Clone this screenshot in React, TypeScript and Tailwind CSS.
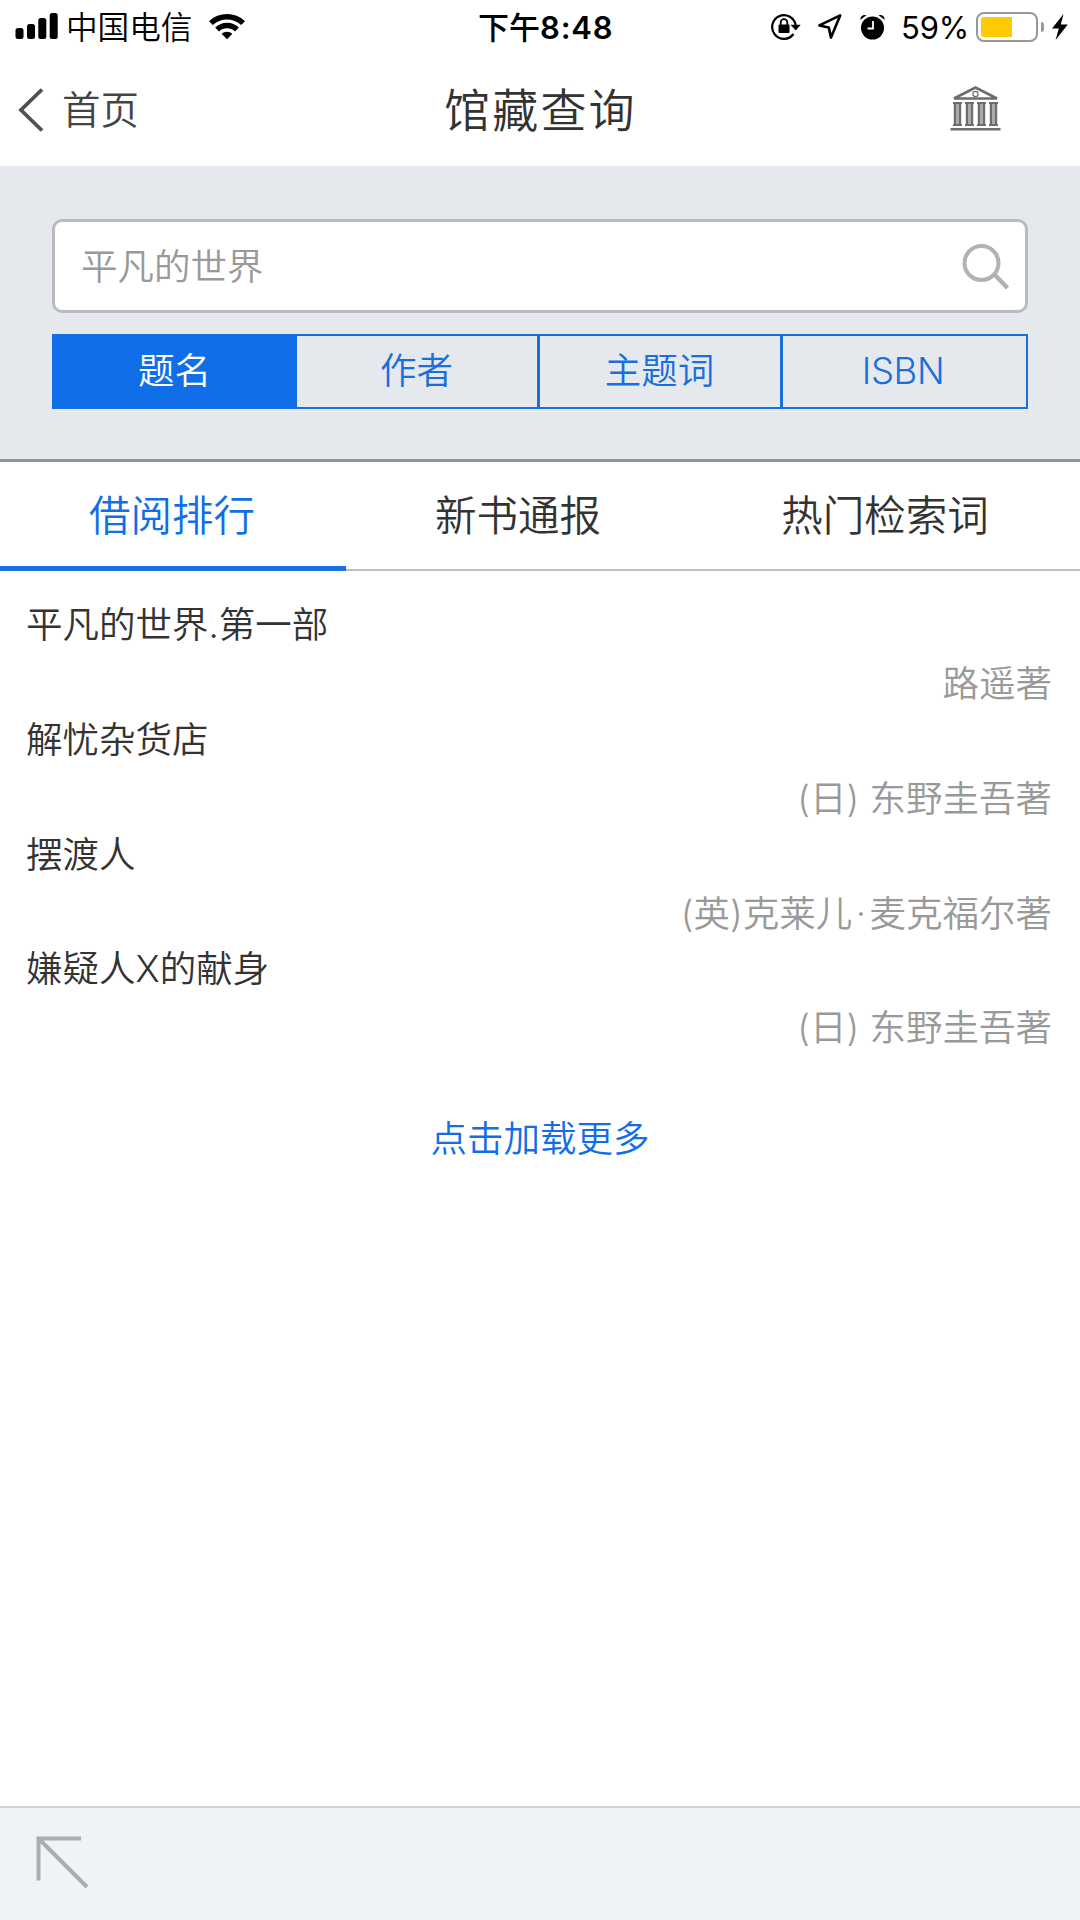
import React from 'react';

const searchTypes = [
  { id: 1, label: '题名', cell: 'w-[245px] bg-[#0f6ee8] text-white' },
  { id: 2, label: '作者', cell: 'w-[243px] border-r-[3px] pr-[1px]' },
  { id: 3, label: '主题词', cell: 'w-[243px] border-r-[3px] pr-[1px]' },
  { id: 4, label: 'ISBN', cell: 'w-[245px] border-r-2 pr-[3px] tracking-[-0.4px]' },
];

const books = [
  { id: 1, title: '平凡的世界.第一部', author: '路遥著' },
  { id: 2, title: '解忧杂货店', author: '(日) 东野圭吾著' },
  { id: 3, title: '摆渡人', author: '(英)克莱儿·麦克福尔著' },
  { id: 4, title: '嫌疑人X的献身', author: '(日) 东野圭吾著' },
];

const StatusBar = () => (
  <div className="flex h-[54px] items-center text-[31px] leading-none text-black">
    <div className="flex w-[478px] items-center">
      <svg className="ml-[15px]" width="44" height="28" viewBox="0 0 44 28">
        <rect x="0.5" y="15" width="8" height="11" rx="2.5" />
        <rect x="12" y="11" width="8" height="15" rx="2.5" />
        <rect x="23.3" y="5" width="8" height="21" rx="2.5" />
        <rect x="34.7" y="0" width="8" height="26" rx="2.5" />
      </svg>
      <span className="ml-[7px] pt-[2px] text-[31.6px] font-[350]">中国电信</span>
      <svg className="ml-[16px]" width="38" height="28" viewBox="0 0 38 28">
        <path d="M1 8.2a26 26 0 0 1 36 0l-3.8 3.9a20.6 20.6 0 0 0-28.4 0z" />
        <path d="M7.2 14.5a17 17 0 0 1 23.6 0l-3.8 3.9a11.6 11.6 0 0 0-16 0z" />
        <path d="M13.6 20.8a8 8 0 0 1 10.8 0L19 26.2z" />
      </svg>
    </div>
    <div className="w-[292px] font-semibold tracking-[0.8px]">
      <span className="font-medium tracking-normal">下午</span>8:48
    </div>
    <svg width="32" height="30" viewBox="0 0 32 30" fill="none" stroke="black" strokeWidth="2.2">
      <path d="M23.5 22a11.8 11.8 0 1 1 2.1-9" />
      <path d="M20.5 12.8h10.2l-5 5.6z" fill="black" stroke="none" />
      <rect x="8.5" y="12.5" width="11" height="8.5" rx="1" fill="black" stroke="none" />
      <path d="M10.7 13V10.5a3.3 3.3 0 0 1 6.6 0V13" strokeWidth="1.8" />
    </svg>
    <svg className="ml-[15px]" width="26" height="28" viewBox="0 0 26 28" fill="none" stroke="black" strokeWidth="2.6" strokeLinejoin="round">
      <path d="M23.2 2.4L2.4 12.4l9.4 2.2 2.2 10z" />
    </svg>
    <svg className="ml-[16px]" width="28" height="28" viewBox="0 0 28 28">
      <circle cx="13.5" cy="15" r="11.5" />
      <path d="M1.5 6.8C1 3.5 4 1 7.4 2.2zM25.5 6.8C26 3.5 23 1 19.6 2.2z" />
      <path d="M14 8v7.5H8.5" fill="none" stroke="white" strokeWidth="1.8" />
    </svg>
    <span className="ml-[14px] w-[66px] tracking-[-0.2px]">59%</span>
    <div className="ml-[9px] h-[30px] w-[62px] rounded-[8px] border-[2px] border-[#989898] p-[3px]">
      <div className="h-full w-[31px] rounded-l-[3px] bg-[#ffcb00]" />
    </div>
    <div className="ml-[3px] h-[10px] w-[3px] rounded-r-full bg-[#989898]" />
    <svg className="ml-[8px]" width="16" height="28" viewBox="0 0 16 28">
      <path d="M11.5 1L0 15.5h6.8L3.6 27 15.8 11.5H8.8z" />
    </svg>
  </div>
);

const MuseumIcon = () => (
  <svg className="mb-[4px]" width="51" height="46" viewBox="0 0 51 46" fill="none" stroke="#6b6e6e">
    <path d="M4 13.5L25.5 2.5 47 13.5z" strokeWidth="2.6" />
    <circle cx="25.5" cy="9" r="2.6" strokeWidth="1.2" />
    {[7.5, 19.5, 31.5, 43.5].map((x) => (
      <g key={x}>
        <path d={`M${x} 18v22`} strokeWidth="3.4" stroke="#a9abab" />
        <path d={`M${x - 2.6} 18v22M${x + 2.6} 18v22`} strokeWidth="2.2" />
        <path d={`M${x - 4.5} 18h9M${x - 4.5} 40h9`} strokeWidth="2.2" />
      </g>
    ))}
    <path d="M0.5 44.3h50" strokeWidth="2.6" />
  </svg>
);

const Header = () => (
  <div className="flex h-[112px] items-center font-[350]">
    <div className="flex w-[444px] items-center text-[38.5px] text-[#444]">
      <svg className="ml-[17px] mr-[17px]" width="28" height="46" viewBox="0 0 28 46" fill="none" stroke="#505050" strokeWidth="3.8">
        <path d="M25 2.5L4 23l21 20.5" />
      </svg>
      <span>首页</span>
    </div>
    <h1 className="w-[506px] pb-[1px] text-[46px] font-[350] tracking-[2.2px] text-[#333]">馆藏查询</h1>
    <MuseumIcon />
  </div>
);

const App = () => {
  return (
    <div className="flex h-[1920px] w-[1080px] flex-col bg-white font-['Inter','Noto_Sans_CJK_SC',sans-serif] text-[36.5px] leading-none text-[#333]">
      <StatusBar />
      <Header />

      <div className="flex h-[296px] flex-col border-b-[3px] border-[#8f9498] bg-[#e5e9ee] px-[52px] pt-[53px] font-[350]">
        <div className="flex h-[94px] items-center justify-between rounded-[10px] border-[3px] border-[#b9bbbf] bg-white pl-[26px] pr-[14px] text-[#999]">
          <span className="pt-[2px]">平凡的世界</span>
          <svg width="50" height="50" viewBox="0 0 50 50" fill="none" stroke="#b2b2b2" strokeWidth="4">
            <circle cx="20.5" cy="22" r="17" />
            <path d="M33 33l13.5 14" strokeWidth="4.5" />
          </svg>
        </div>
        <div className="mt-[21px] flex h-[75px] text-[#1a6fdc]">
          {searchTypes.map((type) => (
            <div key={type.id} className={`flex items-center justify-center border-y-2 border-[#1a6fdc] ${type.cell}`}>
              {type.label}
            </div>
          ))}
        </div>
      </div>

      <div className="flex h-[109px] text-[41.5px] font-[350]">
        <div className="flex w-[346px] items-center justify-center border-b-[5px] border-[#1a70e0] pr-[2px] pt-[6px] text-[#0f6ee8]">借阅排行</div>
        <div className="flex w-[346px] items-center justify-center border-b-2 border-[#bfbfbf] pr-[2px] pt-[3px]">新书通报</div>
        <div className="flex flex-1 items-center justify-center border-b-2 border-[#bfbfbf] pr-[2px] pt-[3px]">热门检索词</div>
      </div>

      <div className="pl-[26px] pr-[28px] pt-[25px] font-[350]">
        {books.map((book) => (
          <div key={book.id} className="h-[114.8px]">
            <p className="leading-[58px]">{book.title}</p>
            <p className="text-right leading-[61px] text-[#999]">
              {book.author.split('·').map((part, i) => (
                <React.Fragment key={i}>
                  {i > 0 && <span className="px-[3.5px]">·</span>}
                  {part}
                </React.Fragment>
              ))}
            </p>
          </div>
        ))}
      </div>
      <div className="mt-[66px] text-center font-[350] text-[#0f6ee8]">点击加载更多</div>

      <div className="mt-auto h-[114px] border-t-2 border-[#cfd1d3] bg-[#eff3f8]">
        <svg className="ml-[35px] mt-[28px]" width="54" height="54" viewBox="0 0 54 54" fill="none" stroke="#a9adb1" strokeWidth="4">
          <path d="M46 2.5H3.500v42M4 3l48 48" />
        </svg>
      </div>
    </div>
  );
};

export default App;
